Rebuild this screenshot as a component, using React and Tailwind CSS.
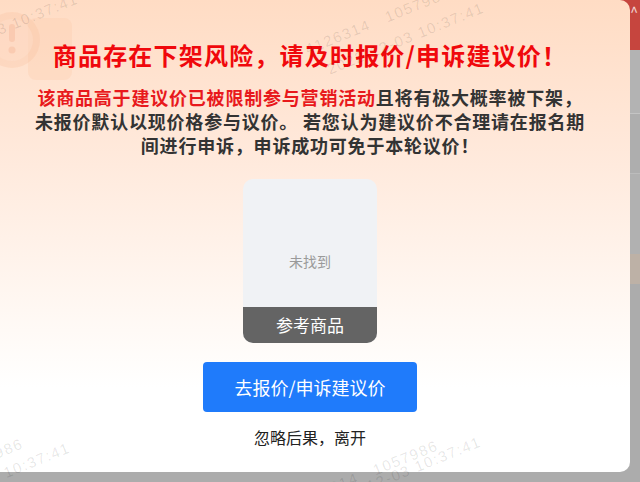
import React from "react";

const font = { fontFamily: '"Noto Sans CJK SC", "Noto Sans", sans-serif' };

const Watermark = ({ className, text }) => (
  <div
    className={`pointer-events-none absolute origin-left -rotate-[22deg] text-[15px] leading-[18px] tracking-[1.5px] text-black/[0.1] whitespace-pre ${className}`}
    style={{ fontFamily: '"Liberation Sans", sans-serif' }}
  >
    {text}
  </div>
);

const Backdrop = () => (
  <div className="flex h-full w-full flex-col bg-[#ababab]">
    <div className="flex h-[50px] items-start justify-end bg-[#c6453e] pr-[2px] pt-[4px] text-[14px] leading-none text-white/80">
      <span>^</span>
    </div>
    <div className="h-[64px] border-b border-[#c4c4c4] bg-[#b3b3b3]" />
    <div className="h-[60px] border-b border-[#bcbcbc] bg-[#aeaeae]" />
    <div className="h-[80px] bg-[#b1b1b1]" />
    <div className="h-[30px] bg-[#bdb1a6]" />
    <div className="flex-1 bg-[#acacac]" />
  </div>
);

const Decoration = () => (
  <svg className="absolute left-0 top-0" width="110" height="120" viewBox="0 0 110 120">
    <rect x="38" y="18" width="44" height="62" rx="8" fill="#fbcbaa" opacity="0.3" />
    <circle cx="22" cy="40" r="28" fill="#f8c0a0" opacity="0.3" />
    <circle cx="22" cy="40" r="21" fill="#ffe2d0" opacity="0.35" />
    <rect x="19" y="24" width="6" height="18" rx="3" fill="#f3b090" opacity="0.35" />
    <circle cx="22" cy="50" r="3.5" fill="#f3b090" opacity="0.35" />
  </svg>
);

const LINE1 = "4126314   1057986";
const LINE2 = "2022-12-03 10:37:41";

export default function App() {
  return (
    <div className="relative h-[482px] w-[640px] overflow-hidden" style={font}>
      <Backdrop />

      {/* 弹窗 */}
      <div className="absolute left-[-10px] top-0 flex h-[472px] w-[640px] flex-col items-center rounded-[10px] bg-[linear-gradient(180deg,#ffdcc4_0%,#ffeadd_35%,#fffaf6_70%,#ffffff_82%)]">
        <Decoration />

        <h1 className="relative mt-[39px] text-[24px] font-bold leading-[32px] tracking-[1.2px] text-[#f0080c]">
          商品存在下架风险，请及时报价/申诉建议价！
        </h1>

        <p className="relative mt-[14px] text-center text-[18px] font-bold leading-[24px] tracking-[0.8px] text-[#333333]">
          <span className="text-[#e8191c]">该商品高于建议价已被限制参与营销活动</span>且将有极大概率被下架，
          <br />
          未报价默认以现价格参与议价。 若您认为建议价不合理请在报名期
          <br />
          间进行申诉，申诉成功可免于本轮议价！
        </p>

        <div className="relative mt-[22px] flex h-[164px] w-[134px] flex-col overflow-hidden rounded-[10px] bg-[#f0f2f5]">
          <div className="flex flex-1 items-center justify-center pt-[36px] text-[14px] text-[#9a9a9a]">未找到</div>
          <div className="flex h-[36px] items-center justify-center bg-[#646464] text-[17px] text-white">参考商品</div>
        </div>

        <button className="relative mt-[19px] h-[50px] w-[214px] rounded-[4px] bg-[#1f7bfb] text-[18px] text-white">
          去报价/申诉建议价
        </button>

        <div className="relative mt-[15px] text-[16px] leading-[20px] text-[#222222]">忽略后果，离开</div>
      </div>

      {/* 水印 */}
      <Watermark className="left-[-78px] top-[52px]" text={LINE2} />
      <Watermark className="left-[306px] top-[41px]" text={LINE1} />
      <Watermark className="left-[328px] top-[61px]" text={LINE2} />
      <Watermark className="left-[-121px] top-[492px]" text={LINE1} />
      <Watermark className="left-[-86px] top-[501px]" text={LINE2} />
      <Watermark className="left-[294px] top-[494px]" text={LINE1} />
      <Watermark className="left-[325px] top-[495px]" text={LINE2} />
    </div>
  );
}
